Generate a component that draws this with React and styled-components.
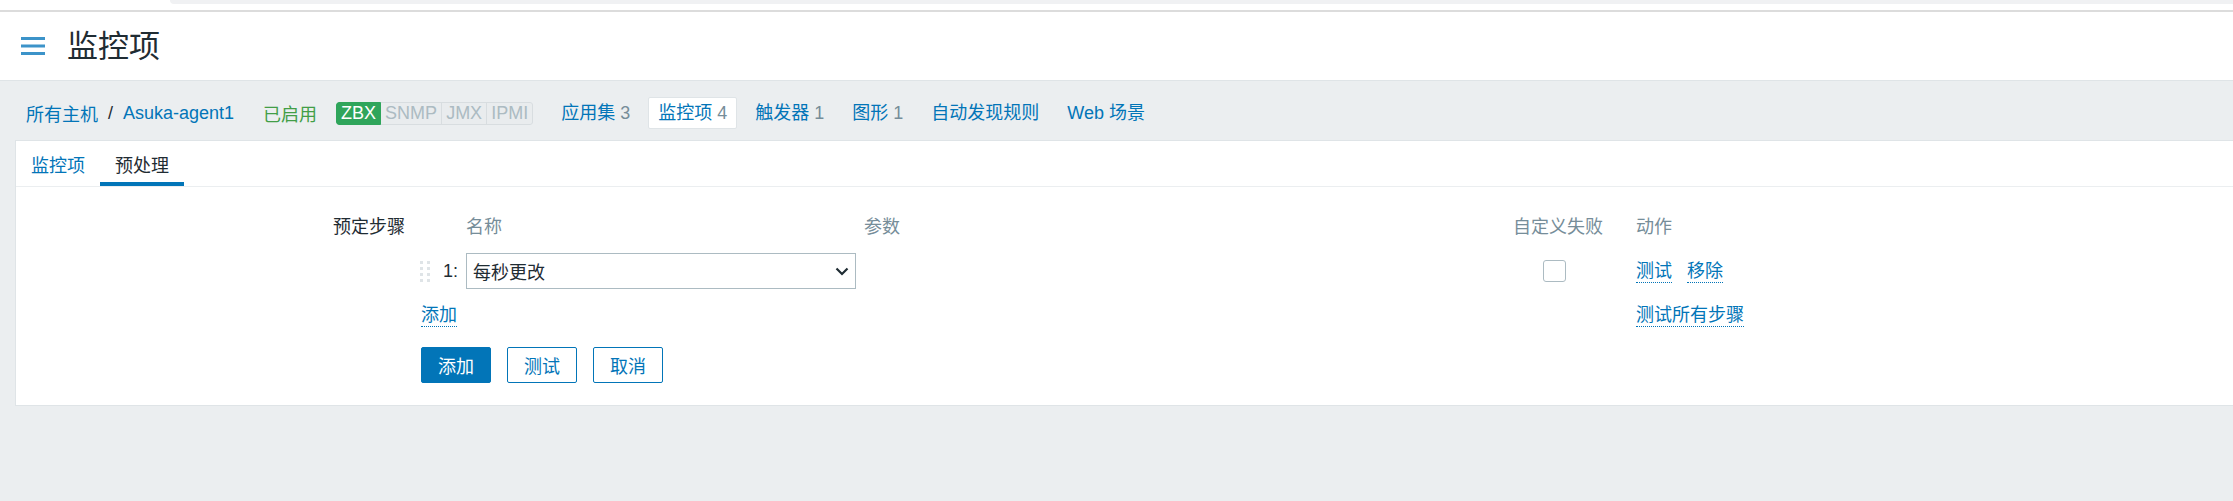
import React from 'react'
import styled, { createGlobalStyle, css } from 'styled-components'

const GlobalStyle = createGlobalStyle`
  html, body {
    margin: 0;
    padding: 0;
    background: #ebeef0;
  }
  body {
    font-family: "Liberation Sans", Arial, "Noto Sans CJK SC", sans-serif;
    font-size: 18px;
    color: #1f2c33;
  }
  * {
    box-sizing: border-box;
  }
`

const Page = styled.div`
  min-height: 100vh;
  overflow: hidden;
  background: #ebeef0;
`

const Chrome = styled.div`
  height: 12px;
  background: #fff;
  border-bottom: 2px solid #dcdcdc;

  & > .strip {
    margin-left: 170px;
    height: 4px;
    background: #f0f1f3;
    border-bottom-left-radius: 6px;
  }
`

const Header = styled.header`
  display: flex;
  align-items: center;
  height: 69px;
  padding-left: 21px;
  background: #fff;
  border-bottom: 1px solid #dfe4e7;
`

const Title = styled.h1`
  margin: 0 0 0 22px;
  font-size: 31px;
  font-weight: normal;
  line-height: 1;
  color: #1f2c33;
`

const Nav = styled.nav`
  display: flex;
  align-items: center;
  height: 59px;
  padding: 5px 0 0 26px;
`

const Crumb = styled.a`
  color: #0275b8;
  text-decoration: none;
`

const Separator = styled.span`
  margin: 0 10px;
  color: #1f2c33;
`

const Status = styled.span`
  margin-left: 29px;
  color: #429e47;
`

const Badges = styled.div`
  display: flex;
  margin-left: 19px;
  border-radius: 3px;
  overflow: hidden;
`

const Badge = styled.span`
  height: 23px;
  line-height: 21px;
  padding: 0 4px;
  border: 1px solid #d8dde0;
  border-left-width: 0;
  background: #e9ecee;
  color: #acbbc2;

  &:last-child {
    border-radius: 0 3px 3px 0;
  }

  ${p =>
    p.$on &&
    css`
      border: 1px solid #2fa55b;
      background: #2fa55b;
      color: #fff;
      border-radius: 3px 0 0 3px;
    `}
`

const NavList = styled.div`
  display: flex;
  align-items: center;
  margin-left: 18px;
`

const NavItem = styled.a`
  height: 32px;
  line-height: 30px;
  padding: 0 9px;
  margin-right: 8px;
  border: 1px solid transparent;
  border-radius: 2px;
  color: #0275b8;
  text-decoration: none;
  white-space: nowrap;

  ${p =>
    p.$active &&
    css`
      background: #fff;
      border-color: #dfe4e7;
    `}
`

const Count = styled.span`
  color: #768d99;
`

const Panel = styled.section`
  margin-left: 15px;
  background: #fff;
  border: 1px solid #dfe4e7;
  border-right: none;
`

const Tabs = styled.div`
  display: flex;
  height: 46px;
  border-bottom: 1px solid #ebeef0;
`

const Tab = styled.a`
  display: flex;
  align-items: center;
  padding: 0 15px;
  color: ${p => (p.$active ? '#1f2c33' : '#0275b8')};
  box-shadow: ${p => (p.$active ? 'inset 0 -4px 0 #0275b8' : 'none')};
  text-decoration: none;
`

const Form = styled.div`
  display: grid;
  grid-template-columns: 389px 1fr;
  column-gap: 16px;
  row-gap: 13px;
  padding: 21px 0 22px;
`

const FormLabel = styled.div`
  text-align: right;
  line-height: 38px;
`

const Steps = styled.div`
  display: grid;
  grid-template-columns: 45px 398px 649px 123px auto;
  grid-template-rows: 38px 36px 38px;
  row-gap: 7px;
  align-items: center;
`

const Head = styled.div`
  color: #768d99;
  line-height: 38px;
`

const Index = styled.div`
  display: flex;
  align-items: center;
  justify-content: space-between;
  padding-right: 8px;
  margin-left: -1px;
`

const Handle = styled.span`
  display: grid;
  grid-template-columns: repeat(2, 3px);
  gap: 3px 4px;

  & > i {
    width: 3px;
    height: 3px;
    background: #dfe4e7;
  }
`

const Select = styled.div`
  display: flex;
  align-items: center;
  justify-content: space-between;
  width: 390px;
  height: 36px;
  padding: 0 6px;
  border: 1px solid #acbbc2;
  background: #fff;
`

const CheckCell = styled.div`
  padding-left: 30px;
`

const Checkbox = styled.span`
  display: block;
  width: 23px;
  height: 22px;
  border: 1px solid #acbbc2;
  border-radius: 3px;
  background: #fff;
`

const Actions = styled.div`
  display: flex;
  gap: 15px;
`

const Link = styled.a`
  display: inline-block;
  line-height: 22px;
  color: #0275b8;
  text-decoration: none;
  border-bottom: 1px dotted #0275b8;
`

const Span2 = styled.div`
  grid-column: span 2;
`

const Buttons = styled.div`
  display: flex;
  gap: 16px;
`

const Button = styled.button`
  height: 36px;
  padding: 0 16px;
  border: 1px solid #0275b8;
  border-radius: 2px;
  font: inherit;
  background: ${p => (p.$primary ? '#0275b8' : '#fff')};
  color: ${p => (p.$primary ? '#fff' : '#0275b8')};
`

const navItems = [
  { label: '应用集', count: 3 },
  { label: '监控项', count: 4, active: true },
  { label: '触发器', count: 1 },
  { label: '图形', count: 1 },
  { label: '自动发现规则' },
  { label: 'Web 场景' }
]

const MenuIcon = () => (
  <svg width="24" height="18" viewBox="0 0 24 18">
    <rect y="0" width="24" height="3" fill="#3c93c9" />
    <rect y="7.5" width="24" height="3" fill="#3c93c9" />
    <rect y="15" width="24" height="3" fill="#3c93c9" />
  </svg>
)

const Chevron = () => (
  <svg width="14" height="9" viewBox="0 0 14 9">
    <path d="M1.5 1.5l5.5 5.5 5.5-5.5" fill="none" stroke="#1f2c33" strokeWidth="2.2" />
  </svg>
)

export default () => {
  return (
    <Page>
      <GlobalStyle />
      <Chrome>
        <div className="strip" />
      </Chrome>
      <Header>
        <MenuIcon />
        <Title>监控项</Title>
      </Header>
      <Nav>
        <Crumb href="#">所有主机</Crumb>
        <Separator>/</Separator>
        <Crumb href="#">Asuka-agent1</Crumb>
        <Status>已启用</Status>
        <Badges>
          <Badge $on>ZBX</Badge>
          <Badge>SNMP</Badge>
          <Badge>JMX</Badge>
          <Badge>IPMI</Badge>
        </Badges>
        <NavList>
          {navItems.map(item => (
            <NavItem key={item.label} href="#" $active={item.active}>
              {item.label}
              {item.count !== undefined && <Count> {item.count}</Count>}
            </NavItem>
          ))}
        </NavList>
      </Nav>
      <Panel>
        <Tabs>
          <Tab href="#">监控项</Tab>
          <Tab href="#" $active>
            预处理
          </Tab>
        </Tabs>
        <Form>
          <FormLabel>预定步骤</FormLabel>
          <Steps>
            <div />
            <Head>名称</Head>
            <Head>参数</Head>
            <Head>自定义失败</Head>
            <Head>动作</Head>

            <Index>
              <Handle>
                {Array.from({ length: 8 }).map((_, i) => (
                  <i key={i} />
                ))}
              </Handle>
              <span>1:</span>
            </Index>
            <Select>
              <span>每秒更改</span>
              <Chevron />
            </Select>
            <div />
            <CheckCell>
              <Checkbox />
            </CheckCell>
            <Actions>
              <Link href="#">测试</Link>
              <Link href="#">移除</Link>
            </Actions>

            <Span2>
              <Link href="#">添加</Link>
            </Span2>
            <div />
            <div />
            <div>
              <Link href="#">测试所有步骤</Link>
            </div>
          </Steps>
          <div />
          <Buttons>
            <Button $primary>添加</Button>
            <Button>测试</Button>
            <Button>取消</Button>
          </Buttons>
        </Form>
      </Panel>
    </Page>
  )
}
